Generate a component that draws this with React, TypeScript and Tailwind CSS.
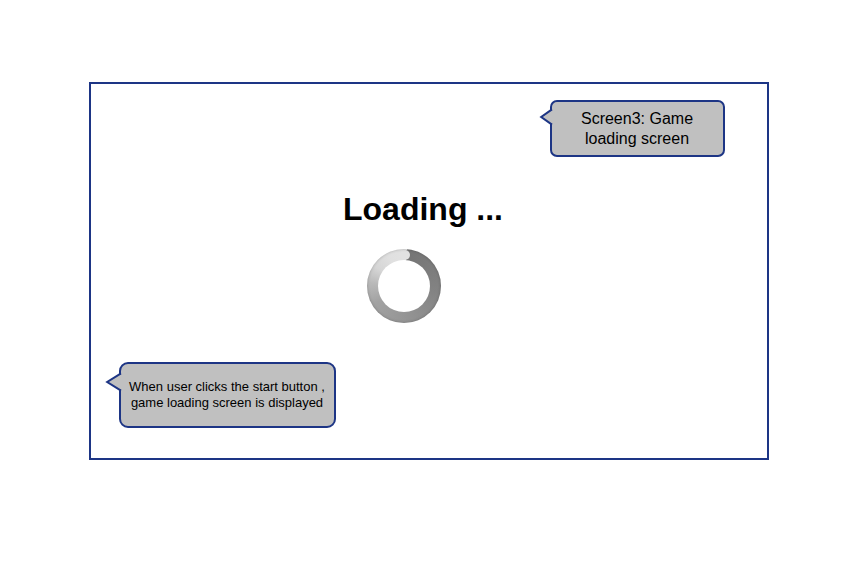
import type { ReactNode } from 'react';

type CalloutProps = { className: string; tail: ReactNode; children: ReactNode };

function Callout({ className, tail, children }: CalloutProps) {
  return (
    <div
      className={`relative flex flex-col items-center justify-center border-2 border-[#1d3585] bg-[#c0c0c0] whitespace-nowrap ${className}`}
    >
      {tail}
      {children}
    </div>
  );
}

function Tail({ className, width, height }: { className: string; width: number; height: number }) {
  const mid = height / 2;
  return (
    <svg className={`absolute ${className}`} width={width} height={height} viewBox={`0 0 ${width} ${height}`}>
      <path d={`M${width} 2.5 H${width - 2} L2 ${mid} L${width - 2} ${height - 2.5} H${width} Z`} fill="#c0c0c0" />
      <path
        d={`M${width - 1} 1.4 L2.2 ${mid} L${width - 1} ${height - 1.4}`}
        fill="none"
        stroke="#1d3585"
        strokeWidth="2"
      />
    </svg>
  );
}

function Spinner() {
  return (
    <div className="relative size-[74px] rounded-full bg-[conic-gradient(from_4deg,#747474_0deg,#828282_90deg,#969696_180deg,#a2a2a2_235deg,#b8b8b8_270deg,#d6d6d6_300deg,#e0e0e0_330deg,#e2e2e2_360deg)]">
      <div className="absolute top-px left-[33px] size-[10px] rounded-full bg-[#e2e2e2]" />
      <div className="absolute inset-0 rounded-full shadow-[inset_0_0_3px_rgba(0,0,0,0.25)]" />
      <div className="absolute inset-[11px] rounded-full bg-white" />
    </div>
  );
}

export default function App() {
  return (
    <div className="h-[562px] w-[868px] bg-white pt-[82px] pl-[89px] font-['Liberation_Sans',Arial,sans-serif] text-black">
      <main className="flex h-[378px] w-[680px] flex-col border-2 border-[#1d3585]">
        <div className="flex justify-end pt-4 pr-[42px]">
          <Callout
            className="h-[57px] w-[175px] rounded-[7px] pr-px text-base leading-5"
            tail={<Tail className="top-[6px] -left-[13px]" width={14} height={18} />}
          >
            <span>Screen3: Game</span>
            <span>loading screen</span>
          </Callout>
        </div>
        <h1 className="mt-[34px] ml-[252px] text-[32px] leading-9 font-bold">Loading ...</h1>
        <div className="mt-[22px] ml-[276px]">
          <Spinner />
        </div>
        <div className="mt-[39px] ml-7">
          <Callout
            className="h-[66px] w-[217px] rounded-[9px] pr-px text-[13px] leading-4"
            tail={<Tail className="top-[8px] -left-[16px]" width={17} height={20} />}
          >
            <span>When user clicks the start button ,</span>
            <span>game loading screen is displayed</span>
          </Callout>
        </div>
      </main>
    </div>
  );
}
